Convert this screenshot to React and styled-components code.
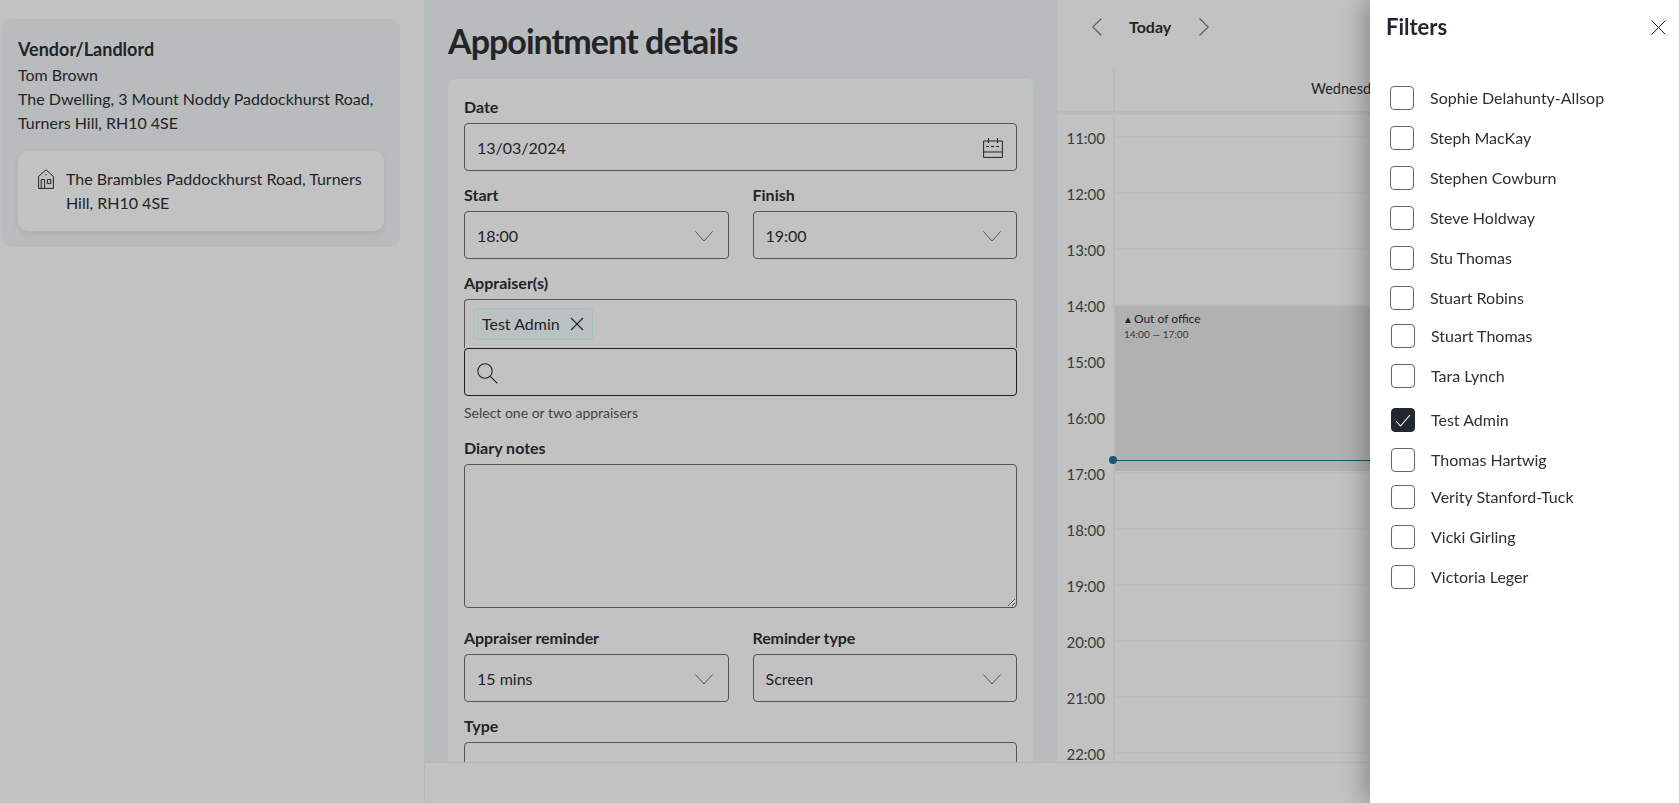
import React from "react";
import styled, { createGlobalStyle } from "styled-components";

const GlobalStyle = createGlobalStyle`
  html, body {
    margin: 0;
    padding: 0;
    height: 100%;
    overflow: hidden;
    font-family: Lato, "Open Sans", sans-serif;
    font-size: 16px;
    color: #232427;
    background: #c2c2c2;
  }
  * { box-sizing: border-box; }
`;

const FILTERS = [
  { name: "Sophie Delahunty-Allsop", top: 0 },
  { name: "Steph MacKay", top: 16 },
  { name: "Stephen Cowburn", top: 16 },
  { name: "Steve Holdway", top: 16 },
  { name: "Stu Thomas", top: 16 },
  { name: "Stuart Robins", top: 16 },
  { name: "Stuart Thomas", top: 14, nudge: 1 },
  { name: "Tara Lynch", top: 16, nudge: 1 },
  { name: "Test Admin", top: 20, nudge: 1, checked: true },
  { name: "Thomas Hartwig", top: 16, nudge: 1 },
  { name: "Verity Stanford-Tuck", top: 13, nudge: 1 },
  { name: "Vicki Girling", top: 16, nudge: 1 },
  { name: "Victoria Leger", top: 16, nudge: 1 },
];

const HOURS = ["11:00", "12:00", "13:00", "14:00", "15:00", "16:00", "17:00", "18:00", "19:00", "20:00", "21:00", "22:00"];

function ChevronDown() {
  return (
    <DownIcon viewBox="0 0 18 11" fill="none" stroke="#555" strokeWidth="1">
      <path d="M0.5 0.5 L9 10 L17.5 0.5" />
    </DownIcon>
  );
}

function SelectBox({ value }) {
  return (
    <Control>
      <span>{value}</span>
      <ChevronDown />
    </Control>
  );
}

export default function App() {
  return (
    <Page>
      <GlobalStyle />
      <LeftColumn>
        <VendorCard>
          <VendorTitle>Vendor/Landlord</VendorTitle>
          <VendorLine>Tom Brown</VendorLine>
          <VendorLine>The Dwelling, 3 Mount Noddy Paddockhurst Road, Turners Hill, RH10 4SE</VendorLine>
          <PropertyCard>
            <svg width="16" height="20" viewBox="0 0 16 20" fill="none" stroke="#222" strokeWidth="1" style={{ flexShrink: 0 }}>
              <path d="M0.6 19.4 V7.4 L8 0.8 L15.4 7.4 V19.4 Z" />
              <path d="M7.4 5.6 H8.6" />
              <path d="M3.2 19.4 V10.6 H6.6 V19.4" />
              <path d="M9.4 10.6 H12.8 V14.6 H9.4 Z" />
            </svg>
            <span>The Brambles Paddockhurst Road, Turners Hill, RH10 4SE</span>
          </PropertyCard>
        </VendorCard>
      </LeftColumn>

      <MiddleColumn>
        <PageTitle>Appointment details</PageTitle>
        <FormCard>
          <Field>
            <Label>Date</Label>
            <Control>
              <span>13/03/2024</span>
              <CalendarIcon width="20" height="20" viewBox="0 0 20 20" fill="none" stroke="#222" strokeWidth="1">
                <path d="M0.6 3 H19.4 V19.4 H0.6 Z" />
                <path d="M0.6 14 H19.4" />
                <path d="M5.5 0 V5 M14.5 0 V5" />
                <path d="M3 8.5 H17" strokeDasharray="3 2" />
              </CalendarIcon>
            </Control>
          </Field>
          <TwoCols>
            <Field>
              <Label>Start</Label>
              <SelectBox value="18:00" />
            </Field>
            <Field>
              <Label>Finish</Label>
              <SelectBox value="19:00" />
            </Field>
          </TwoCols>
          <Field>
            <Label>Appraiser(s)</Label>
            <ChipBox>
              <Chip>
                Test Admin
                <svg width="14" height="14" viewBox="0 0 14 14" stroke="#222" strokeWidth="1.1">
                  <path d="M1 1 L13 13 M13 1 L1 13" />
                </svg>
              </Chip>
            </ChipBox>
            <SearchBox>
              <svg width="21" height="21" viewBox="0 0 21 21" fill="none" stroke="#222" strokeWidth="1.1">
                <circle cx="8" cy="8" r="7.2" />
                <path d="M13.2 13.4 L20.4 20.4" />
              </svg>
            </SearchBox>
            <Hint>Select one or two appraisers</Hint>
          </Field>
          <Field>
            <Label>Diary notes</Label>
            <NotesArea />
          </Field>
          <TwoCols $top={20}>
            <Field>
              <Label $tight>Appraiser reminder</Label>
              <SelectBox value="15 mins" />
            </Field>
            <Field>
              <Label $tight>Reminder type</Label>
              <SelectBox value="Screen" />
            </Field>
          </TwoCols>
          <Field>
            <Label>Type</Label>
            <SelectBox value="Appraisal" />
          </Field>
        </FormCard>
      </MiddleColumn>

      <CalendarColumn>
        <CalendarToolbar>
          <svg width="10" height="18" viewBox="0 0 10 18" fill="none" stroke="#555" strokeWidth="1.1">
            <path d="M9.5 0.5 L0.7 9 L9.5 17.5" />
          </svg>
          <TodayLabel>Today</TodayLabel>
          <svg width="10" height="18" viewBox="0 0 10 18" fill="none" stroke="#555" strokeWidth="1.1">
            <path d="M0.5 0.5 L9.3 9 L0.5 17.5" />
          </svg>
        </CalendarToolbar>
        <CalendarHead>
          <HeadGutter />
          <DayName>Wednesday 13 March</DayName>
        </CalendarHead>
        <CalendarBody>
          <TimeGutter>
            {HOURS.map((hour) => (
              <TimeLabel key={hour}>{hour}</TimeLabel>
            ))}
          </TimeGutter>
          <DayGrid>
            {HOURS.map((hour) => (
              <HourRow key={hour} />
            ))}
            <EventBlock>
              <EventTitle>
                <EventMark>▲</EventMark>Out of office
              </EventTitle>
              <EventTime>14:00 — 17:00</EventTime>
            </EventBlock>
            <NowLine />
          </DayGrid>
        </CalendarBody>
      </CalendarColumn>

      <FooterBar />

      <Drawer>
        <DrawerHead>
          <DrawerTitle>Filters</DrawerTitle>
          <svg width="15" height="15" viewBox="0 0 15 15" stroke="#222" strokeWidth="1">
            <path d="M0.5 0.5 L14.5 14.5 M14.5 0.5 L0.5 14.5" />
          </svg>
        </DrawerHead>
        <FilterList>
          {FILTERS.map((f) => (
            <FilterRow key={f.name} $top={f.top} $nudge={f.nudge || 0}>
              <CheckBox $checked={f.checked}>
                {f.checked && (
                  <svg width="16" height="13" viewBox="0 0 16 13" fill="none" stroke="#fff" strokeWidth="1.1">
                    <path d="M1 7 L5.5 12 L15 1" />
                  </svg>
                )}
              </CheckBox>
              {f.name}
            </FilterRow>
          ))}
        </FilterList>
      </Drawer>
    </Page>
  );
}

const Page = styled.div`
  display: flex;
  height: 100vh;
  overflow: hidden;
  background: #c2c2c2;
`;

const LeftColumn = styled.div`
  width: 424px;
  flex-shrink: 0;
  padding: 19px 24px 0 2px;
`;

const VendorCard = styled.div`
  background: #b8bcbd;
  border-radius: 10px;
  padding: 16px;
  height: 228px;
`;

const VendorTitle = styled.div`
  font-size: 18px;
  font-weight: 700;
  line-height: 28px;
`;

const VendorLine = styled.div`
  line-height: 24px;
`;

const PropertyCard = styled.div`
  display: flex;
  gap: 12px;
  align-items: flex-start;
  margin-top: 16px;
  height: 80px;
  padding: 16px 20px;
  background: #c2c2c2;
  border-radius: 10px;
  line-height: 24px;
  box-shadow: 0 2px 6px rgba(0, 0, 0, 0.08);

  svg {
    margin-top: 2px;
  }
`;

const MiddleColumn = styled.div`
  width: 633px;
  flex-shrink: 0;
  padding: 19px 24px 0;
  background: #b8bcbd;
  overflow: hidden;
`;

const PageTitle = styled.h1`
  margin: 0 0 16px;
  font-size: 34px;
  font-weight: 700;
  line-height: 44px;
  letter-spacing: -0.95px;
`;

const FormCard = styled.div`
  display: flex;
  flex-direction: column;
  gap: 14px;
  padding: 18px 16px;
  background: #c2c2c2;
  border-radius: 6px;
`;

const Field = styled.div`
  display: flex;
  flex-direction: column;
  min-width: 0;
`;

const TwoCols = styled.div`
  display: grid;
  grid-template-columns: 1fr 1fr;
  gap: 24px;
  margin-top: ${(p) => (p.$top ? p.$top - 14 : 0)}px;
`;

const Label = styled.label`
  font-weight: 700;
  line-height: 20px;
  margin-bottom: 6px;
  letter-spacing: ${(p) => (p.$tight ? "-0.1px" : "0")};
`;

const Control = styled.div`
  display: flex;
  align-items: center;
  justify-content: space-between;
  height: 48px;
  padding: 2px 12px 0;
  border: 1px solid #555;
  border-radius: 4px;
  line-height: 24px;
`;

const CalendarIcon = styled.svg`
  margin-right: 1px;
`;

const DownIcon = styled.svg`
  width: 18px;
  height: 11px;
  margin-right: 3px;
`;

const ChipBox = styled.div`
  display: flex;
  align-items: flex-start;
  height: 49px;
  padding: 8px;
  border: 1px solid #555;
  border-bottom: none;
  border-radius: 4px 4px 0 0;
`;

const Chip = styled.div`
  display: flex;
  align-items: center;
  gap: 10px;
  height: 32px;
  padding: 0 8px 1px;
  background: #bac1c1;
  border: 1px solid #a3c2c0;
  border-radius: 3px;
`;

const SearchBox = styled.div`
  display: flex;
  align-items: center;
  height: 48px;
  padding: 2px 12px 0;
  border: 1px solid #1e1e1e;
  border-radius: 4px;
`;

const Hint = styled.div`
  margin: 7px 0 1px;
  font-size: 14px;
  line-height: 20px;
  color: #444;
`;

const NotesArea = styled.textarea`
  display: block;
  width: 100%;
  height: 144px;
  padding: 12px;
  background: transparent;
  border: 1px solid #555;
  border-radius: 4px;
  outline: none;
  resize: vertical;
  font: inherit;
`;

const CalendarColumn = styled.div`
  flex: 1;
  min-width: 0;
  overflow: hidden;
  display: flex;
  flex-direction: column;
`;

const CalendarToolbar = styled.div`
  display: flex;
  align-items: center;
  gap: 28px;
  height: 54px;
  margin-bottom: 14px;
  padding-left: 35px;
  flex-shrink: 0;
`;

const TodayLabel = styled.div`
  font-weight: 700;
  line-height: 20px;
  margin-left: -1px;
`;

const CalendarHead = styled.div`
  display: flex;
  height: 47px;
  flex-shrink: 0;
  border-bottom: 4px solid #b8bcbd;
`;

const HeadGutter = styled.div`
  width: 58px;
  flex-shrink: 0;
  border-right: 2px solid #b9bdbe;
`;

const DayName = styled.div`
  padding: 12px 0 0 196px;
  font-size: 14.5px;
  line-height: 18px;
  white-space: nowrap;
`;

const CalendarBody = styled.div`
  display: flex;
  flex: 1;
`;

const TimeGutter = styled.div`
  width: 58px;
  flex-shrink: 0;
  padding: 14px 8px 0 0;
  border-right: 2px solid #b9bdbe;
  text-align: right;
`;

const TimeLabel = styled.div`
  height: 56px;
  font-size: 15px;
  line-height: 18px;
  color: #3a3a3c;
`;

const DayGrid = styled.div`
  position: relative;
  flex: 1;
  padding-top: 21px;
`;

const HourRow = styled.div`
  height: 56px;
  border-top: 2px solid #b9bdbe;
`;

const EventBlock = styled.div`
  position: absolute;
  top: 191px;
  left: 0;
  right: 0;
  height: 165px;
  padding: 5px 9px;
  background: #b1b1b1;
`;

const EventTitle = styled.div`
  font-size: 12px;
  line-height: 16px;
  margin-bottom: 1px;
`;

const EventMark = styled.span`
  font-size: 10px;
  margin: 0 1px 0 -1px;
`;

const EventTime = styled.div`
  font-size: 10px;
  line-height: 13px;
  color: #3a3a3c;
`;

const NowLine = styled.div`
  position: absolute;
  top: 345px;
  left: 0;
  right: 0;
  height: 1px;
  background: #135a6c;

  &::before {
    content: "";
    position: absolute;
    left: -6px;
    top: -4px;
    width: 8px;
    height: 8px;
    border-radius: 50%;
    background: #135a6c;
  }
`;

const FooterBar = styled.div`
  position: fixed;
  left: 424px;
  right: 0;
  bottom: 0;
  height: 41px;
  background: #c2c2c2;
  border-top: 1px solid #b5b5b5;
  border-left: 1px solid #b9b9b9;
`;

const Drawer = styled.aside`
  position: fixed;
  top: 0;
  right: 0;
  bottom: 0;
  width: 309px;
  background: #fff;
  box-shadow: -6px 0 22px rgba(0, 0, 0, 0.28);
`;

const DrawerHead = styled.div`
  display: flex;
  align-items: center;
  justify-content: space-between;
  padding: 12px 13px 0 16px;
`;

const DrawerTitle = styled.div`
  font-size: 22px;
  font-weight: 700;
  line-height: 30px;
  color: #22262f;
`;

const FilterList = styled.div`
  margin-top: 44px;
  padding-left: 20px;
`;

const FilterRow = styled.div`
  display: flex;
  align-items: center;
  gap: 16px;
  height: 24px;
  margin-top: ${(p) => p.$top}px;
  margin-left: ${(p) => p.$nudge}px;
  color: #2b2f38;
  line-height: 24px;
`;

const CheckBox = styled.div`
  display: flex;
  align-items: center;
  justify-content: center;
  width: 24px;
  height: 24px;
  flex-shrink: 0;
  border: 1px solid ${(p) => (p.$checked ? "#22262f" : "#666")};
  border-radius: 4px;
  background: ${(p) => (p.$checked ? "#22262f" : "#fff")};
`;
